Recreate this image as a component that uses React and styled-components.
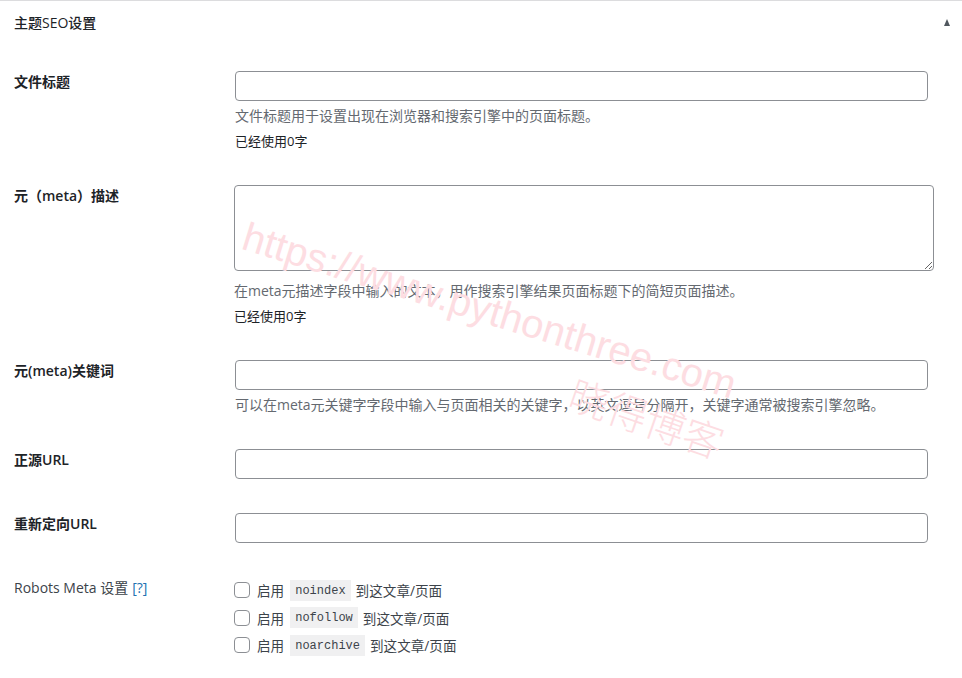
import React from "react";
import styled, { createGlobalStyle } from "styled-components";

const GlobalStyle = createGlobalStyle`
  html, body { margin: 0; padding: 0; background: #fff; }
  body {
    font-family: "Open Sans", "Noto Sans CJK SC", sans-serif;
    color: #3c434a;
    font-size: 13px;
  }
`;

const Panel = styled.div`
  position: relative;
  width: 962px;
  min-height: 678px;
  border-top: 1px solid #dcdcde;
  background: #fff;
  overflow: hidden;
`;

const Header = styled.div`
  height: 43px;
  display: flex;
  align-items: center;
  justify-content: space-between;
  padding: 0 12px 0 14px;
`;

const HeaderTitle = styled.h2`
  margin: 0;
  font-size: 14px;
  font-weight: 500;
  color: #1d2327;
  line-height: 20px;
`;

const Toggle = styled.span`
  width: 0;
  height: 0;
  border-left: 3.5px solid transparent;
  border-right: 3.5px solid transparent;
  border-bottom: 7px solid #50575e;
  margin-top: -1px;
`;

const Body = styled.div`
  padding-top: 10px;
`;

const Row = styled.div`
  display: grid;
  grid-template-columns: 220px 1fr;
  align-items: start;
  padding: 17px 0;
`;

const Label = styled.div`
  padding-left: 14px;
  margin-top: 1px;
  font-size: 14px;
  line-height: 20px;
  font-weight: ${(p) => (p.$plain ? 400 : 600)};
  color: ${(p) => (p.$plain ? "#3c434a" : "#1d2327")};
`;

const HelpLink = styled.a`
  color: #2271b1;
  text-decoration: none;
  margin-left: 4px;
`;

const Field = styled.div`
  display: flex;
  flex-direction: column;
  align-items: flex-start;
  padding-left: ${(p) => p.$offset || 15}px;
`;

const TextInput = styled.input`
  box-sizing: border-box;
  width: 693px;
  height: 30px;
  margin: 0;
  border: 1px solid #8c8f94;
  border-radius: 4px;
  background: #fff;
  padding: 0 8px;
  font: inherit;
`;

const TextArea = styled.textarea`
  box-sizing: border-box;
  display: block;
  width: 700px;
  height: 86px;
  margin: 0 0 5px;
  border: 1px solid #8c8f94;
  border-radius: 4px;
  background: #fff;
  padding: 4px 8px;
  font: inherit;
`;

const Help = styled.p`
  margin: 5px 0 0;
  font-size: ${(p) => (p.$dark ? 13 : 14)}px;
  line-height: 20px;
  color: ${(p) => (p.$dark ? "#1d2327" : "#646970")};
`;

const CheckList = styled.div`
  display: flex;
  flex-direction: column;
  padding-left: 14px;
`;

const CheckRow = styled.label`
  display: flex;
  align-items: center;
  height: 27.5px;
  font-size: 13.6px;
  color: #3c434a;
  &:first-child { margin-top: -0.5px; }
`;

const Box = styled.span`
  box-sizing: border-box;
  width: 16px;
  height: 16px;
  border: 1px solid #8c8f94;
  border-radius: 4px;
  background: #fff;
  margin-right: 7px;
  flex: none;
`;

const Code = styled.code`
  font-family: "Liberation Mono", "DejaVu Sans Mono", monospace;
  font-size: 12px;
  line-height: 15px;
  padding: 4px 5px 2px;
  background: #f0f0f1;
  color: #3c434a;
  margin: 0 5px 0 6px;
`;

const Watermark = styled.div`
  position: absolute;
  left: ${(p) => p.$x}px;
  top: ${(p) => p.$y}px;
  transform-origin: 0 0;
  transform: rotate(${(p) => p.$deg}deg);
  font-family: "Liberation Sans", "Noto Sans CJK SC", sans-serif;
  font-size: 40px;
  line-height: 1;
  font-weight: 300;
  color: #fddde2;
  white-space: nowrap;
  pointer-events: none;
`;

const robots = ["noindex", "nofollow", "noarchive"];

export default function App() {
  return (
    <>
      <GlobalStyle />
      <Panel>
        <Header>
          <HeaderTitle>主题SEO设置</HeaderTitle>
          <Toggle />
        </Header>
        <Body>
          <Row>
            <Label>文件标题</Label>
            <Field>
              <TextInput />
              <Help>文件标题用于设置出现在浏览器和搜索引擎中的页面标题。</Help>
              <Help $dark>已经使用0字</Help>
            </Field>
          </Row>
          <Row>
            <Label>元（meta）描述</Label>
            <Field $offset={14}>
              <TextArea />
              <Help>在meta元描述字段中输入的文本，用作搜索引擎结果页面标题下的简短页面描述。</Help>
              <Help $dark>已经使用0字</Help>
            </Field>
          </Row>
          <Row>
            <Label>元(meta)关键词</Label>
            <Field>
              <TextInput />
              <Help>可以在meta元关键字字段中输入与页面相关的关键字，以英文逗号分隔开，关键字通常被搜索引擎忽略。</Help>
            </Field>
          </Row>
          <Row>
            <Label>正源URL</Label>
            <Field>
              <TextInput />
            </Field>
          </Row>
          <Row>
            <Label>重新定向URL</Label>
            <Field>
              <TextInput />
            </Field>
          </Row>
          <Row>
            <Label $plain>
              Robots Meta 设置<HelpLink href="#">[?]</HelpLink>
            </Label>
            <CheckList>
              {robots.map((r) => (
                <CheckRow key={r}>
                  <Box />
                  启用
                  <Code>{r}</Code>
                  到这文章/页面
                </CheckRow>
              ))}
            </CheckList>
          </Row>
        </Body>
        <Watermark $x={250} $y={215} $deg={17}>
          https://www.pythonthree.com
        </Watermark>
        <Watermark $x={577} $y={374} $deg={19}>
          晓得博客
        </Watermark>
      </Panel>
    </>
  );
}
